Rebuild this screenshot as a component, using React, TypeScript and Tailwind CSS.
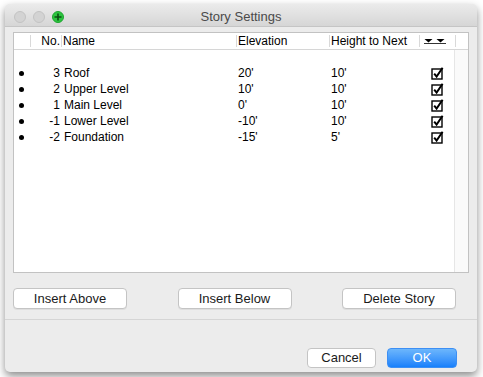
import React from 'react';

const stories = [
  { no: '3', name: 'Roof', elev: "20'", next: "10'" },
  { no: '2', name: 'Upper Level', elev: "10'", next: "10'" },
  { no: '1', name: 'Main Level', elev: "0'", next: "10'" },
  { no: '-1', name: 'Lower Level', elev: "-10'", next: "10'" },
  { no: '-2', name: 'Foundation', elev: "-15'", next: "5'" },
];

function Check() {
  return (
    <svg width="13" height="13" viewBox="0 0 13 13">
      <rect x="1" y="2" width="10" height="10" fill="white" stroke="black" strokeWidth="1.4" />
      <path d="M3.2 6.6 L5.6 9.6 L11.6 0.8" fill="none" stroke="black" strokeWidth="2" />
    </svg>
  );
}

function SortArrows() {
  return (
    <svg width="24" height="8" viewBox="0 0 24 8">
      <polygon points="1.5,2 9.5,2 5.5,5.5" fill="black" />
      <polygon points="13.5,2 21.5,2 17.5,5.5" fill="black" />
      <line x1="1" y1="6.5" x2="23" y2="6.5" stroke="black" strokeWidth="0.8" />
    </svg>
  );
}

function Button({ children }: { children: React.ReactNode }) {
  return (
    <button className="w-[114px] h-[21px] bg-white border border-[#c4c4c4] rounded-[4px] text-[13px] text-[#1a1a1a] shadow-[0_1px_0_rgba(0,0,0,0.06)] flex items-center justify-center">
      {children}
    </button>
  );
}

export default function App() {
  return (
    <div className="w-[483px] h-[377px] bg-white pt-[4px] pl-[5px] overflow-hidden font-['Liberation_Sans',Arial,sans-serif]">
      <div className="w-[472px] h-[368px] bg-[#ececec] rounded-[5px] shadow-[0_4px_9px_rgba(0,0,0,0.45)] flex flex-col overflow-hidden">
        {/* title bar */}
        <div className="h-[23px] grid grid-cols-[70px_1fr_70px] items-center bg-gradient-to-b from-[#ebebeb] to-[#d6d6d6] border-b border-[#c5c5c5]">
          <div className="flex items-center gap-[7px] pl-[9px] pt-[4px]">
            <div className="w-[12px] h-[12px] rounded-full bg-[#d3d3d3] border border-[#c3c3c3]" />
            <div className="w-[12px] h-[12px] rounded-full bg-[#d3d3d3] border border-[#c3c3c3]" />
            <div className="w-[12px] h-[12px] rounded-full bg-[#2cc43f] border border-[#1ea52f] flex items-center justify-center">
              <svg width="8" height="8" viewBox="0 0 8 8">
                <path d="M4 0.5 V7.5 M0.5 4 H7.5" stroke="#0b4d12" strokeWidth="1.6" />
              </svg>
            </div>
          </div>
          <div className="text-center text-[13px] text-[#4a4a4a] pt-[3px]">Story Settings</div>
          <div />
        </div>

        {/* table */}
        <div className="mx-[8px] mt-[5px] h-[241px] border border-[#c2c2c2] bg-white flex flex-col text-[12px] text-black">
          <div className="h-[17px] flex border-b border-[#d6d6d6] shrink-0">
            <div className="w-[16px]" />
            <div className="w-[31px] my-[2px] border-l border-[#d9d9d9] flex items-center justify-end pr-[1px]">No.</div>
            <div className="w-[175px] my-[2px] border-l border-[#d9d9d9] flex items-center pl-[1px]">Name</div>
            <div className="w-[93px] my-[2px] border-l border-[#d9d9d9] flex items-center pl-[1px]">Elevation</div>
            <div className="w-[90px] my-[2px] border-l border-[#d9d9d9] flex items-center pl-[1px]">Height to Next</div>
            <div className="w-[36px] my-[2px] border-l border-[#d9d9d9] flex items-center pl-[3px]">
              <SortArrows />
            </div>
            <div className="flex-1 my-[2px] border-l border-[#d9d9d9]" />
          </div>
          <div className="flex-1 flex">
            <div className="flex-1 pt-[15px]">
              {stories.map((s) => (
                <div key={s.no} className="h-[16px] flex items-center">
                  <div className="w-[16px] flex items-center pl-[5px]">
                    <div className="w-[5px] h-[5px] rounded-full bg-black" />
                  </div>
                  <div className="w-[31px] text-right pr-[1px]">{s.no}</div>
                  <div className="w-[175px] pl-[3px]">{s.name}</div>
                  <div className="w-[93px] pl-[2px]">{s.elev}</div>
                  <div className="w-[90px] pl-[2px]">{s.next}</div>
                  <div className="pl-[12px] flex items-center">
                    <Check />
                  </div>
                </div>
              ))}
            </div>
            <div className="w-[14px] bg-[#fafafa] border-l border-[#e6e6e6]" />
          </div>
        </div>

        {/* action buttons */}
        <div className="mt-[15px] ml-[8px] w-[443px] flex justify-between">
          <Button>Insert Above</Button>
          <Button>Insert Below</Button>
          <Button>Delete Story</Button>
        </div>

        <div className="mt-[10px] h-px bg-[#d5d5d5]" />

        <div className="mt-[28px] flex justify-end gap-[11px] pr-[20px]">
          <button className="w-[69px] h-[20px] bg-white border border-[#c4c4c4] rounded-[4px] text-[13px] text-[#1a1a1a] flex items-center justify-center">
            Cancel
          </button>
          <button className="w-[70px] h-[20px] bg-gradient-to-b from-[#6cb6fc] to-[#1680fb] border border-[#3d8ff4] rounded-[4px] text-[13px] text-white flex items-center justify-center">
            OK
          </button>
        </div>
      </div>
    </div>
  );
}
